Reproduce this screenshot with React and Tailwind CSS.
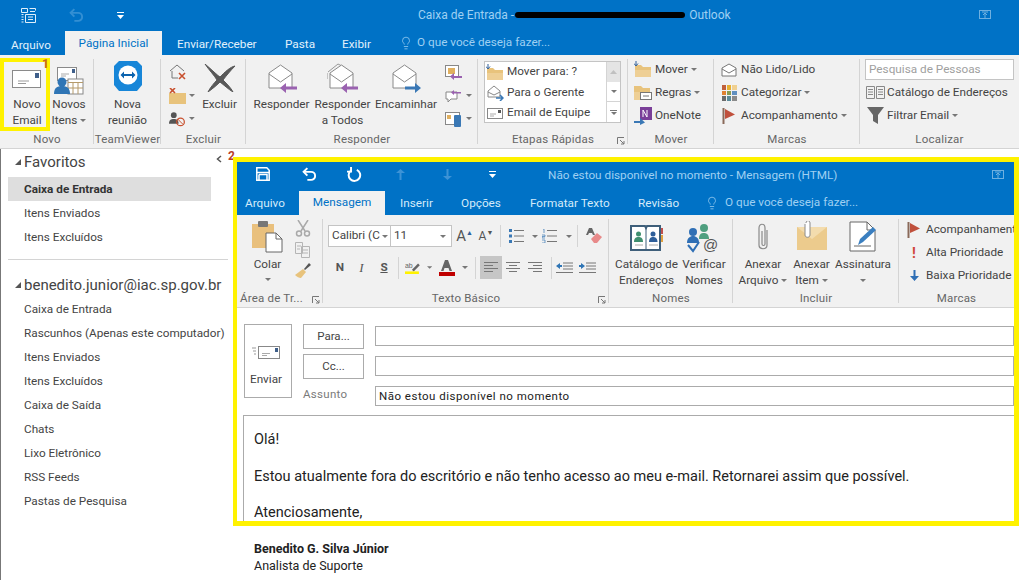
import React from 'react';
import { Lightbulb } from 'lucide-react';

const Caret = ({ className = 'ml-[3px]' }) => (
  <svg width="6" height="3" viewBox="0 0 6 3" className={`inline-block align-middle ${className}`}><path d="M0 0h6L3 3z" fill="#777" /></svg>
);

const Launcher = () => (
  <svg width="8" height="8" viewBox="0 0 8 8" className="absolute right-[3px] bottom-[3px]"><path d="M.5 7V.5H7M3 3l4 4M7 4v3H4" stroke="#777" fill="none" /></svg>
);

// ribbon pieces
const Group = ({ w, label, launcher, children, last }) => (
  <div className={`${w} shrink-0 h-full flex flex-col relative`}>
    <div className="flex-1 min-h-0 flex pt-[5px]">{children}</div>
    <div className="h-[16px] leading-[15px] text-center text-[11.5px] text-[#666] tracking-[0.2px] whitespace-nowrap">{label}</div>
    {launcher && <Launcher />}
    {!last && <div className="absolute right-0 top-[4px] bottom-[4px] w-px bg-[#d4d4d4]" />}
  </div>
);

const Large = ({ w, icon, lines, caret }) => (
  <div className={`${w} shrink-0 flex flex-col items-center text-[#444] whitespace-nowrap`}>
    <div className="h-[36px] flex items-end justify-center">{icon}</div>
    {lines.map((l, i) => (
      <div key={i} className="h-[16px] leading-[16px]">{l}{caret && i === lines.length - 1 && <Caret />}</div>
    ))}
  </div>
);

const Small = ({ icon, text, caret, h = 'h-[23px]' }) => (
  <div className={`${h} flex items-center text-[#444] whitespace-nowrap`}>
    <div className="w-[20px] mr-[2px] flex justify-center shrink-0">{icon}</div>
    {text}{caret && <Caret />}
  </div>
);

const Cell = ({ w, children, className = '' }) => (
  <div className={`${w} h-[22px] shrink-0 flex items-center justify-center ${className}`}>{children}</div>
);

const Sep = () => <div className="w-px h-[22px] bg-[#d4d4d4] shrink-0" />;

// drawings
const Envelope = () => (
  <svg width="30" height="20" viewBox="0 0 30 20"><rect x=".5" y=".5" width="28" height="17" fill="#fff" stroke="#8a8a8a" /><path d="M6 11h11M6 13.500h8" stroke="#9a9a9a" /><rect x="23" y="3" width="4" height="5" fill="#3f5f8a" /></svg>
);
const People = () => (
  <svg width="30" height="29" viewBox="0 0 30 29">
    <rect x="3.500" y=".5" width="19" height="13" fill="#fff" stroke="#8a8a8a" /><rect x="18" y="2" width="3" height="4" fill="#3f5f8a" /><path d="M7 7h8M7 9h5" stroke="#aaa" />
    <rect x="14" y="12" width="15" height="15" fill="#fff" stroke="#888" /><path d="M14 15.500h15M19 16v11M24 16v11M14 21h15" stroke="#b59a6a" />
    <circle cx="8" cy="15" r="4.500" fill="#2f75b5" /><path d="M0 27c0-6 3-8 8-8s8 2 8 8z" fill="#2f75b5" />
  </svg>
);
const TeamViewer = () => (
  <svg width="28" height="30" viewBox="0 0 28 30">
    <path d="M5 0h18l5 5v19l-5 6H5l-5-6V5z" fill="#1786d8" />
    <circle cx="14" cy="14" r="9.500" fill="#fff" /><path d="M6.500 14l3.500-3.500v2.500h8v-2.500l3.500 3.500-3.500 3.500V15h-8v2.500z" fill="#0a62ad" />
  </svg>
);
const BigX = () => (
  <svg width="32" height="28" viewBox="0 0 32 28"><path d="M1 0c7 6 12 11 15 13C21 8 26 3 31 2c-4 4-9 10-12 14 4 4 8 8 10 12-5-3-9-7-13-10-4 4-8 7-12 10 2-4 6-9 9-12C10 11 5 6 1 0z" fill="#585858" stroke="#585858" /></svg>
);
const OpenMail = ({ arrow, back, color = '#9a62b0' }) => (
  <svg width="32" height="30" viewBox="0 0 32 30">
    {back && <path d="M1 9L11 1l6 3M0 10v6" fill="none" stroke="#999" />}
    <path d="M3 10L14.500 2 26 10v15H3z" fill="#fff" stroke="#8a8a8a" /><path d="M3 11l11.500 8L26 11" fill="none" stroke="#8a8a8a" />
    {arrow === 'left'
      ? <path d="M31 23.500H20V20l-6 5 6 5v-3.500h11z" fill={color} />
      : <path d="M15 23.500h10V20l6 5-6 5v-3.500H15z" fill={color} />}
  </svg>
);
const Folder = ({ arrow }) => (
  <svg width="18" height="17" viewBox="0 0 18 17"><path d="M1 4h6l2 2h8v10H1z" fill="#e8c37c" /><path d="M1 9h16v7H1z" fill="#eecf95" />{arrow && <path d="M2 0v4M0 2.500L2 5l2-2.500" stroke="#2f5f9a" fill="none" />}</svg>
);
const Paper = () => (
  <svg width="33" height="34" viewBox="0 0 33 34">
    <path d="M1 5h22v24H1z" fill="#e9c07d" /><rect x="7" y="2" width="10" height="6" fill="#777" rx="1" />
    <path d="M15 14h10l6 6v13H15z" fill="#fff" stroke="#666" /><path d="M25 14v6h6" fill="none" stroke="#666" />
  </svg>
);
const Scissors = () => (
  <svg width="16" height="17" viewBox="0 0 16 17" fill="none" stroke="#a9a9a9" strokeWidth="1.500"><path d="M3 0l7 11M13 0L6 11" /><circle cx="4" cy="13.500" r="2.500" /><circle cx="12" cy="13.500" r="2.500" /></svg>
);
const Lines = ({ arrow }) => (
  <svg width="17" height="12" viewBox="0 0 17 12"><path d="M7 1h10M7 4h10M7 7h10M0 10.500h17" stroke="#777" />{arrow && <path d={arrow} fill="#2f75b5" />}</svg>
);
const Align = ({ d }) => <svg width="14" height="11" viewBox="0 0 14 11"><path d={d} stroke="#777" /></svg>;
const Book = () => (
  <svg width="33" height="28" viewBox="0 0 33 28">
    <path d="M1 2h14l1 2 1-2h13v24H1z" fill="#fff" stroke="#3f5f7a" strokeWidth="2" /><path d="M16 3v22" stroke="#3f5f7a" />
    <circle cx="8.500" cy="10" r="2.500" fill="#3f8f6f" /><path d="M4 18c0-4 2-5 4.500-5s4.500 1 4.500 5z" fill="#3f8f6f" />
    <circle cx="23" cy="10" r="2.500" fill="#2f5f9a" /><path d="M19 18c0-4 2-5 4-5s4.500 1 4.500 5z" fill="#2f5f9a" />
    <path d="M5 21h8M19 21h9" stroke="#aaa" /><path d="M31 4h2v6h-2z" fill="#c0504d" /><path d="M31 11h2v7h-2z" fill="#e0a040" />
  </svg>
);
const Verify = () => (
  <svg width="36" height="29" viewBox="0 0 36 29">
    <circle cx="18" cy="4" r="4" fill="#4f9f7f" /><path d="M13 15c0-5 2-6 5-6s5 2 5 6z" fill="#4f9f7f" />
    <circle cx="7" cy="8" r="4" fill="#2f6fb5" /><path d="M1 19c0-5 3-7 6-7s6 2 6 7z" fill="#2f6fb5" />
    <path d="M2 21l5 6 6-9" fill="none" stroke="#2f6fb5" strokeWidth="2" />
    <text x="17" y="26" fontSize="15" fill="#555" fontFamily="Liberation Sans">@</text>
  </svg>
);
const Clip = () => (
  <svg width="14" height="30" viewBox="0 0 14 30" fill="none" stroke="#8a8a8a" strokeWidth="1.200"><path d="M11 7v15c0 5-8 5-8 0V5c0-5 6-5 6 0v16c0 2-3 2-3 0V8" /></svg>
);
const ClipMail = () => (
  <svg width="30" height="29" viewBox="0 0 30 29"><path d="M0 6h30v23H0z" fill="#eccb8d" /><path d="M0 6l15 12L30 6" fill="#f3dcae" /><path d="M8 3v11c0 3 5 3 5 0V2c0-3-4-3-4 0" fill="#fff" stroke="#8a8a8a" /></svg>
);
const Signature = () => (
  <svg width="28" height="31" viewBox="0 0 28 31"><path d="M1 1h17l8 8v21H1z" fill="#fff" stroke="#666" /><path d="M18 1v8h8" fill="none" stroke="#666" /><path d="M5 25h17" stroke="#666" /><path d="M9 24l2-6 13-12 3 3-13 12z" fill="#3a7fc0" /></svg>
);
const Flag = () => <svg width="14" height="16" viewBox="0 0 14 16"><path d="M1.500 0v16" stroke="#8a6a5a" strokeWidth="2" /><path d="M3 1l10 5.500L3 11z" fill="#c0503c" /></svg>;
const Undo = ({ c = '#fff' }) => (
  <svg width="15" height="14" viewBox="0 0 14 13" fill="none" stroke={c} strokeWidth="1.800"><path d="M5 1L1.500 4.500 5 8" /><path d="M2 4.500h6.500a3.500 3.500 0 0 1 0 7.500H5" /></svg>
);
const Redo = () => (
  <svg width="15" height="15" viewBox="0 0 13 13" fill="none" stroke="#fff" strokeWidth="1.700"><path d="M8.500 2.500a5 5 0 1 1-5 .5" /><path d="M3.500 0v4h-3.500" /></svg>
);
const VArrow = ({ d }) => <svg width="9" height="11" viewBox="0 0 9 11"><path d={d} fill="#3d93d6" /></svg>;
const QatMenu = () => <svg width="7" height="7" viewBox="0 0 7 7"><path d="M0 .5h7" stroke="#fff" /><path d="M0 3h7L3.500 7z" fill="#fff" /></svg>;
const Restore = () => <svg width="12" height="9" viewBox="0 0 12 9" fill="none" stroke="#6fb0e0"><rect x=".5" y=".5" width="11" height="8" /><path d="M6 8V3M4 5l2-2 2 2M3 2h6" /></svg>;

const favorites = ['Itens Enviados', 'Itens Excluídos'];
const account = ['Caixa de Entrada', 'Rascunhos (Apenas este computador)', 'Itens Enviados', 'Itens Excluídos', 'Caixa de Saída', 'Chats', 'Lixo Eletrônico', 'RSS Feeds', 'Pastas de Pesquisa'];

function MainRibbon() {
  return (
    <div className="h-[93px] bg-[#f1f1f1] flex border-b border-[#d4d4d4] box-content">
      <Group w="w-[94px]" label="Novo">
        <div className="w-[51px] shrink-0 relative">
          <div className="absolute left-0 top-[-2px] w-[50px] h-[73px] border-[4px] border-[#fff200] bg-[#f3f3f3]" />
          <span className="absolute left-[42px] top-[-3px] text-[12px] leading-[14px] font-bold text-[#c8641e]">1</span>
          <div className="relative"><Large w="w-[54px]" icon={<div className="pb-[6px]"><Envelope /></div>} lines={['Novo', 'Email']} /></div>
        </div>
        <Large w="w-[36px]" icon={<People />} lines={['Novos', 'Itens']} caret />
      </Group>
      <Group w="w-[67px]" label="TeamViewer">
        <Large w="w-[67px]" icon={<div className="pb-[5px]"><TeamViewer /></div>} lines={['Nova', 'reunião']} />
      </Group>
      <Group w="w-[85px]" label="Excluir">
        <div className="w-[34px] pl-[8px] pt-[1px] shrink-0">
          <div className="h-[23px] flex items-center"><svg width="18" height="17" viewBox="0 0 18 17" fill="none"><path d="M1 7l7-6 7 6M3 7v7h6" stroke="#777" /><path d="M10 9l6 6M16 9l-6 6" stroke="#c8502e" strokeWidth="1.600" /></svg></div>
          <div className="h-[23px] flex items-center"><svg width="17" height="16" viewBox="0 0 17 16"><path d="M0 5h17v11H0z" fill="#e8c37c" /><path d="M1 0l5 5M6 0L1 5" stroke="#c8502e" strokeWidth="1.600" /></svg><Caret className="ml-[3px]" /></div>
          <div className="h-[23px] flex items-center"><svg width="18" height="16" viewBox="0 0 18 16" fill="none"><circle cx="5" cy="4" r="3" fill="#555" /><path d="M0 13c0-4 2-5 5-5s5 1 5 5z" fill="#555" /><circle cx="12" cy="11" r="4" stroke="#c8502e" strokeWidth="1.300" /><path d="M9 8l6 6" stroke="#c8502e" /></svg><Caret className="ml-[3px]" /></div>
        </div>
        <Large w="w-[49px]" icon={<div className="pb-[4px]"><BigX /></div>} lines={['Excluir']} />
      </Group>
      <Group w="w-[232px]" label="Responder">
        <div className="w-[5px] shrink-0" />
        <Large w="w-[61px]" icon={<div className="pb-[3px]"><OpenMail arrow="left" /></div>} lines={['Responder']} />
        <Large w="w-[61px]" icon={<div className="pb-[3px]"><OpenMail arrow="left" back /></div>} lines={['Responder', 'a Todos']} />
        <Large w="w-[66px]" icon={<div className="pb-[3px]"><OpenMail arrow="right" color="#3a78b5" /></div>} lines={['Encaminhar']} />
        <div className="pl-[6px] pt-[1px]">
          <div className="h-[23px] flex items-center"><svg width="17" height="15" viewBox="0 0 17 15"><rect x=".5" y=".5" width="13" height="11" fill="#fff" stroke="#888" /><path d="M3 3h7v6H3z" fill="#e0b060" /><path d="M17 11H9V8l-4 3.500L9 15v-2h8z" fill="#9a62b0" /></svg></div>
          <div className="h-[23px] flex items-center"><svg width="18" height="16" viewBox="0 0 18 16" fill="none"><path d="M1 4h11v7H6l-3 3v-3H1z" stroke="#888" fill="#fff" /><path d="M16 4H9V2L6 4.500 9 7V5.500h7z" fill="#9a62b0" /></svg><Caret className="ml-[3px]" /></div>
          <div className="h-[23px] flex items-center"><svg width="18" height="16" viewBox="0 0 18 16"><rect x=".5" y="1.500" width="14" height="12" fill="#fff" stroke="#888" /><path d="M2 4h4v4H2z" fill="#e0b060" /><rect x="9" y="4" width="7" height="12" rx="1" fill="#3a78b5" /></svg><Caret className="ml-[3px]" /></div>
        </div>
      </Group>
      <Group w="w-[150px]" label="Etapas Rápidas" launcher>
        <div className="ml-[6px] w-[137px] h-[62px] mt-[1px] bg-white border border-[#c4c4c4] flex">
          <div className="flex-1 text-[#444]">
            <Small h="h-[20px]" icon={<Folder arrow />} text="Mover para: ?" />
            <Small h="h-[21px]" icon={<svg width="17" height="16" viewBox="0 0 17 16" fill="none"><path d="M1 6l6-5 6 5v6H1z" stroke="#888" /><path d="M1 7l6 3 6-3" stroke="#888" /><path d="M9 13h7M13 10l3 3-3 3" stroke="#3a78b5" strokeWidth="1.500" /></svg>} text="Para o Gerente" />
            <Small h="h-[20px]" icon={<svg width="16" height="11" viewBox="0 0 16 11" fill="none"><rect x=".5" y=".5" width="15" height="10" stroke="#888" fill="#fff" /><path d="M3 6h6M3 8h4" stroke="#aaa" /><rect x="11" y="2" width="3" height="3" fill="#555" /></svg>} text="Email de Equipe" />
          </div>
          <div className="w-[14px] border-l border-[#d4d4d4] flex flex-col">
            <div className="h-[20px] bg-[#e4e4e4] flex items-center justify-center"><svg width="7" height="4" viewBox="0 0 7 4"><path d="M0 4h7L3.500 0z" fill="#c0c0c0" /></svg></div>
            <div className="h-[20px] border-b border-[#d4d4d4] flex items-center justify-center"><Caret className="" /></div>
            <div className="flex-1 flex flex-col items-center justify-center gap-[1px]"><div className="w-[7px] h-px bg-[#777]" /><Caret className="" /></div>
          </div>
        </div>
      </Group>
      <Group w="w-[86px]" label="Mover">
        <div className="pl-[5px] -mt-[2px]">
          <Small icon={<Folder arrow />} text="Mover" caret />
          <Small icon={<svg width="18" height="16" viewBox="0 0 18 16"><path d="M0 1h7l2 2h7v4H0z" fill="#e8c37c" /><path d="M0 7h10v8H0z" fill="#eecf95" /><rect x="6.500" y="7.500" width="11" height="7" fill="#fff" stroke="#777" /><path d="M9 11h6" stroke="#777" /></svg>} text="Regras" caret />
          <Small icon={<svg width="18" height="18" viewBox="0 0 18 18"><rect x="6" y="0" width="12" height="13" fill="#7a3f98" /><path d="M9 10V3l4 7V3" stroke="#fff" fill="none" /><path d="M0 14h6v-3l5 4.500L6 18v-2H0z" fill="#3a78b5" /></svg>} text="OneNote" />
        </div>
      </Group>
      <Group w="w-[146px]" label="Marcas">
        <div className="pl-[5px] -mt-[2px]">
          <Small icon={<svg width="16" height="14" viewBox="0 0 16 14" fill="none"><path d="M1 5l7-4 7 4v8H1z" stroke="#777" fill="#fff" /><path d="M1 6l7 4 7-4" stroke="#777" /></svg>} text="Não Lido/Lido" />
          <Small icon={<svg width="15" height="16" viewBox="0 0 15 16"><path d="M0 0h4v5H0z" fill="#c0603c" /><path d="M5 0h4v5H5z" fill="#e8b030" /><path d="M10 0h5v5h-5z" fill="#f0d090" /><path d="M0 6h4v4H0z" fill="#e08030" /><path d="M5 6h4v4H5z" fill="#8a9a50" /><path d="M10 6h5v4h-5z" fill="#5f8fc0" /><path d="M0 11h4v5H0z" fill="#6a6a6a" /><path d="M5 11h4v5H5z" fill="#5a8a9a" /><path d="M10 11h5v5h-5z" fill="#8a8a8a" /></svg>} text="Categorizar" caret />
          <Small icon={<Flag />} text="Acompanhamento" caret />
        </div>
      </Group>
      <Group w="w-[159px]" label="Localizar" last>
        <div className="pl-[5px] -mt-[1px]">
          <div className="w-[149px] h-[21px] bg-white border border-[#c4c4c4] leading-[19px] pl-[3px] text-[#a0a0a0] mb-[1px]">Pesquisa de Pessoas</div>
          <Small icon={<svg width="19" height="13" viewBox="0 0 19 13" fill="none" stroke="#888"><path d="M.5.500h8v12h-8zM10.500.500h8v12h-8zM2 3.500h5M2 6h5M2 8.500h5M12 3.500h5M12 6h5M12 8.500h5" /></svg>} text="Catálogo de Endereços" />
          <Small icon={<svg width="17" height="17" viewBox="0 0 17 17"><path d="M0 0h17l-6 8v9l-5-3V8z" fill="#666" /></svg>} text="Filtrar Email" caret />
        </div>
      </Group>
    </div>
  );
}

function MessageRibbon() {
  return (
    <div className="h-[93px] bg-[#f1f1f1] flex border-b border-[#d4d4d4]">
      <Group w="w-[86px]" label={<div className="text-left pl-[3px]">Área de Tr...</div>} launcher>
        <div className="w-[57px] shrink-0 flex flex-col items-center pl-[4px]">
          <div className="h-[33px] flex items-end"><Paper /></div>
          <div className="h-[18px] leading-[18px] text-[#444] mt-[2px]">Colar</div>
          <Caret className="mt-[5px]" />
        </div>
        <div className="flex flex-col items-center gap-[5px]">
          <Scissors />
          <svg width="15" height="16" viewBox="0 0 15 16" fill="none" stroke="#b5b5b5"><path d="M.5.500h7v11h-7zM6.500 4.500h8v11h-8zM2 4h4M2 7h3M8 8h5M8 11h5" /></svg>
          <svg width="17" height="15" viewBox="0 0 17 15"><path d="M10 6l5-6 2 2-6 5z" fill="#555" /><path d="M1 12l8-6 3 3-5 6c-2 0-4-1-6-3z" fill="#e8c37c" /></svg>
        </div>
      </Group>
      <Group w="w-[286px]" label="Texto Básico" launcher>
        <div className="pl-[5px] pt-[5px] flex flex-col gap-[9px]">
          <div className="flex items-center">
            <div className="w-[63px] h-[22px] bg-white border border-[#c4c4c4] flex items-center pl-[3px] text-[#444] whitespace-nowrap overflow-hidden">Calibri (C<Caret className="ml-[2px]" /></div>
            <div className="w-[61px] h-[22px] bg-white border border-l-0 border-[#c4c4c4] flex items-center justify-between pl-[3px] pr-[5px] text-[#444]">11<Caret className="" /></div>
            <Cell w="w-[23px]" className="ml-[1px] text-[15px] text-[#555]">A<sup className="text-[7px] text-[#2f5f9a]">▲</sup></Cell>
            <Cell w="w-[20px]" className="text-[12px] text-[#555]">A<sup className="text-[7px] text-[#555]">▼</sup></Cell>
            <div className="w-[4px]" /><Sep />
            <Cell w="w-[41px]" className="justify-start pl-[8px]"><svg width="15" height="14" viewBox="0 0 15 14"><path d="M5 1.500h10M5 7h10M5 12.500h10" stroke="#777" /><path d="M0 0h3v3H0zM0 5.500h3v3H0zM0 11h3v3H0z" fill="#3a78b5" /></svg><Caret className="ml-[8px]" /></Cell>
            <Cell w="w-[35px]" className="justify-start"><svg width="15" height="14" viewBox="0 0 15 14"><path d="M5 1.500h10M5 7h10M5 12.500h10" stroke="#777" /><path d="M1 0h1v4M0 6h3v1.500H0V9h3M0 11h3v3H0" stroke="#3a78b5" fill="none" strokeWidth=".7" /></svg><Caret className="ml-[9px]" /></Cell>
            <Sep />
            <Cell w="w-[31px]"><svg width="16" height="16" viewBox="0 0 16 16"><path d="M3 0h3l3 7H7L6 5H3L2 7H0z" fill="#666" /><path d="M5 11l6-6 5 4-5 6H8z" fill="#e88a8a" /></svg></Cell>
          </div>
          <div className="flex items-center">
            <Cell w="w-[22px]" className="font-bold text-[#555] ml-[1px]">N</Cell>
            <Cell w="w-[21px]" className="italic text-[#555] font-['Liberation_Serif'] text-[13px]">I</Cell>
            <Cell w="w-[24px]" className="font-bold underline text-[#555]">S</Cell>
            <div className="w-[2px]" /><Sep />
            <Cell w="w-[33px]" className="pl-[6px]"><svg width="17" height="15" viewBox="0 0 17 15"><text x="0" y="8" fontSize="8" fill="#666" fontFamily="Liberation Sans">ab</text><path d="M8 10l7-7 2 2-7 7z" fill="#666" /><path d="M0 12h16v3H0z" fill="#fff200" /></svg><Caret className="ml-[7px]" /></Cell>
            <Cell w="w-[37px]" className="pl-[5px]"><svg width="16" height="16" viewBox="0 0 16 16"><path d="M6 0h3l4 11h-2.500L9.500 8h-4L4.500 11H2z" fill="#666" /><path d="M0 12h16v4H0z" fill="#c00000" /></svg><Caret className="ml-[7px]" /></Cell>
            <div className="w-[6px]" /><Sep />
            <Cell w="w-[4px]" />
            <div className="w-[22px] h-[23px] bg-[#c6c6c6] flex items-center justify-center"><Align d="M0 .5h14M0 3.500h9M0 6.500h14M0 9.500h9" /></div>
            <Cell w="w-[22px]"><Align d="M0 .5h14M3 3.500h8M0 6.500h14M3 9.500h8" /></Cell>
            <Cell w="w-[22px]"><Align d="M0 .5h14M5 3.500h9M0 6.500h14M5 9.500h9" /></Cell>
            <div className="w-[5px]" /><Sep />
            <Cell w="w-[24px]"><Lines arrow="M0 4l4-3v2h2v2H4v2z" /></Cell>
            <Cell w="w-[22px]"><Lines arrow="M6 4L2 1v2H0v2h2v2z" /></Cell>
          </div>
        </div>
      </Group>
      <Group w="w-[124px]" label="Nomes">
        <div className="w-[3px] shrink-0" />
        <Large w="w-[69px]" icon={<div className="pb-[4px]"><Book /></div>} lines={['Catálogo de', 'Endereços']} />
        <Large w="w-[46px]" icon={<div className="pb-[3px]"><Verify /></div>} lines={['Verificar', 'Nomes']} />
      </Group>
      <Group w="w-[166px]" label="Incluir">
        <div className="w-[2px] shrink-0" />
        <Large w="w-[56px]" icon={<div className="pb-[3px]"><Clip /></div>} lines={['Anexar', 'Arquivo']} caret />
        <Large w="w-[41px]" icon={<div className="pb-[6px]"><ClipMail /></div>} lines={['Anexar', 'Item']} caret />
        <div className="w-[62px] shrink-0 flex flex-col items-center text-[#444] whitespace-nowrap">
          <div className="h-[36px] flex items-end"><div className="pb-[4px]"><Signature /></div></div>
          <div className="h-[16px] leading-[16px]">Assinatura</div>
          <div className="h-[16px] flex items-center"><Caret className="" /></div>
        </div>
      </Group>
      <Group w="w-[115px]" label="Marcas" last>
        <div className="pl-[5px] -mt-[2px] overflow-hidden w-full">
          <Small icon={<Flag />} text="Acompanhamento" />
          <Small icon={<span className="text-[#d0453a] font-bold text-[14px] leading-[14px]">!</span>} text="Alta Prioridade" />
          <Small icon={<svg width="9" height="11" viewBox="0 0 9 11"><path d="M3.500 0h2v6H9l-4.500 5L0 6h3.500z" fill="#2f6fb5" /></svg>} text="Baixa Prioridade" />
        </div>
      </Group>
    </div>
  );
}

function MessageWindow() {
  return (
    <div className="relative h-[369px] border-y-[5px] border-l-[4px] border-r-[5px] border-[#fff200] flex flex-col overflow-hidden">
      <div className="h-[24px] bg-[#0072c6] flex items-center relative shrink-0">
        <div className="w-[52px] shrink-0 pl-[19px]"><svg width="14" height="14" viewBox="0 0 14 14" fill="none" stroke="#fff" strokeWidth="1.500"><path d="M.8.8h10l2.400 2.400v10H.8z" /><path d="M3 7.500h8v5.500M3 7.500V13" /><path d="M.8 5.500h12.400" /></svg></div>
        <div className="w-[46px] flex justify-center shrink-0 -ml-[3px]"><Undo /></div>
        <div className="w-[45px] flex justify-center shrink-0"><Redo /></div>
        <div className="w-[47px] flex justify-center shrink-0"><VArrow d="M3.500 11V4H0l4.500-4L9 4H5.500v7z" /></div>
        <div className="w-[46px] flex justify-center shrink-0"><VArrow d="M3.500 0v7H0l4.500 4L9 7H5.500V0z" /></div>
        <div className="w-[45px] flex justify-center shrink-0"><QatMenu /></div>
        <div className="ml-[33px] text-[#9fd0f2] whitespace-nowrap pt-[3px]">Não estou disponível no momento - Mensagem (HTML)</div>
        <div className="absolute right-[10px] top-[8px]"><Restore /></div>
      </div>
      <div className="h-[29px] pt-[5px] bg-[#0072c6] flex items-end text-[#d5ebfa] shrink-0 whitespace-nowrap">
        <div className="w-[7px]" />
        <div className="w-[42px] h-[24px] leading-[24px] text-center">Arquivo</div>
        <div className="w-[13px]" />
        <div className="w-[86px] h-[24px] leading-[23px] text-center bg-[#f1f1f1] text-[#0072c6]">Mensagem</div>
        <div className="w-[15px]" />
        <div className="w-[33px] h-[24px] leading-[24px] text-center">Inserir</div>
        <div className="w-[28px]" />
        <div className="w-[40px] h-[24px] leading-[24px] text-center">Opções</div>
        <div className="w-[29px]" />
        <div className="w-[79px] h-[24px] leading-[24px] text-center">Formatar Texto</div>
        <div className="w-[29px]" />
        <div className="w-[40px] h-[24px] leading-[24px] text-center">Revisão</div>
        <div className="w-[27px]" />
        <div className="h-[24px] flex items-center gap-[6px] text-[#9fd0f2]"><Lightbulb size={14} strokeWidth={1.3} />O que você deseja fazer...</div>
      </div>
      <MessageRibbon />
      <div className="h-[107px] bg-white flex shrink-0 pl-[7px] pt-[15px] text-[#444]">
        <div className="w-[48px] pr-[4px] h-[74px] border border-[#ababab] flex flex-col items-center shrink-0 mt-[1px]">
          <svg width="28" height="14" viewBox="0 0 28 14" className="mt-[21px]"><path d="M0 2h4M1 5h3M2 8h2" stroke="#999" /><rect x="6.500" y=".5" width="21" height="12" fill="#fff" stroke="#888" /><path d="M10 7.500h8M10 9.500h5" stroke="#aaa" /><rect x="23" y="2" width="3" height="4" fill="#3f5f8a" /></svg>
          <div className="mt-[12px] leading-[14px]">Enviar</div>
        </div>
        <div className="w-[61px] ml-[11px] shrink-0 mt-[1px]">
          <div className="h-[25px] border border-[#ababab] text-center leading-[23px] text-[11.5px]">Para...</div>
          <div className="h-[25px] mt-[5px] border border-[#ababab] text-center leading-[23px] text-[11.5px]">Cc...</div>
          <div className="mt-[8px] text-[#7a7a7a] text-[11.5px] tracking-[0.3px] leading-[14px]">Assunto</div>
        </div>
        <div className="flex-1 ml-[11px] pt-[3px]">
          <div className="h-[20px] border border-[#ababab]" />
          <div className="h-[20px] border border-[#ababab] mt-[10px]" />
          <div className="h-[20px] border border-[#ababab] mt-[10px] leading-[18px] pl-[3px] text-[#222] text-[11.5px] tracking-[0.5px]">Não estou disponível no momento</div>
        </div>
      </div>
      <div className="flex-1 min-h-0 bg-white pl-[6px]">
        <div className="h-full border-l border-t border-[#ababab] pl-[10px] pt-[15px] text-[14.5px] text-[#222] leading-[18px]">
          <p>Olá!</p>
          <p className="mt-[19px] whitespace-nowrap">Estou atualmente fora do escritório e não tenho acesso ao meu e-mail. Retornarei assim que possível.</p>
          <p className="mt-[18px]">Atenciosamente,</p>
        </div>
      </div>
    </div>
  );
}

export default function App() {
  return (
    <div className="w-[1019px] h-[580px] overflow-hidden bg-white flex flex-col font-['Roboto','Liberation_Sans',sans-serif] text-[11.75px]">
      <div className="h-[30px] bg-[#0072c6] flex items-center relative shrink-0">
        <div className="w-[55px] pl-[20px] shrink-0"><svg width="17" height="17" viewBox="0 0 17 17" fill="none" stroke="#dfeffa"><path d="M1.500 1.500h6v4h-6zM9.500 1.500h6v2M1.500 7.500h2M1.500 10h2M1.500 12.500h2M1.500 15h2M5.500 7.500h10v8h-10zM8 10h5M8 12.500h5M10 4.500h5" /></svg></div>
        <div className="w-[42px] flex justify-center shrink-0 opacity-40"><Undo c="#7fbce8" /></div>
        <div className="w-[27px] flex justify-end shrink-0"><QatMenu /></div>
        <div className="ml-[294px] text-[#9fd0f2] whitespace-nowrap flex items-center text-[12px]">
          Caixa de Entrada - <span className="ml-[1px] w-[170px] h-[6px] rounded-full bg-black inline-block mr-[4px]" /> Outlook
        </div>
        <div className="absolute left-[979px] top-[10px]"><Restore /></div>
      </div>
      <div className="h-[25px] bg-[#0072c6] flex items-end text-[#e2f1fb] shrink-0 whitespace-nowrap">
        <div className="w-[10px]" />
        <div className="w-[42px] h-[24px] leading-[28px] text-center">Arquivo</div>
        <div className="w-[13px]" />
        <div className="w-[97px] h-[24px] leading-[24px] text-center bg-[#f1f1f1] text-[#0072c6]">Página Inicial</div>
        <div className="w-[15px]" />
        <div className="w-[79px] h-[24px] leading-[26px] text-center">Enviar/Receber</div>
        <div className="w-[29px]" />
        <div className="w-[28px] h-[24px] leading-[26px] text-center">Pasta</div>
        <div className="w-[29px]" />
        <div className="w-[29px] h-[24px] leading-[26px] text-center">Exibir</div>
        <div className="w-[28px]" />
        <div className="h-[24px] flex items-center gap-[4px] text-[#9fd0f2]"><Lightbulb size={14} strokeWidth={1.3} />O que você deseja fazer...</div>
      </div>
      <MainRibbon />
      <div className="flex-1 min-h-0 flex">
        <div className="w-[233px] shrink-0 relative border-l border-[#777] text-[#444] pt-[3px]">
          <div className="h-[20px] pl-[14px] flex items-center text-[15px] whitespace-nowrap gap-[3px]"><svg width="6" height="6" viewBox="0 0 6 6"><path d="M6 0v6H0z" fill="#555" /></svg>Favoritos</div>
          <div className="mt-[5px] ml-[7px] w-[203px] h-[24px] bg-[#dedede] pl-[16px] leading-[24px] font-bold text-[#333]">Caixa de Entrada</div>
          {favorites.map(f => <div key={f} className="h-[24px] leading-[24px] pl-[23px]">{f}</div>)}
          <div className="ml-[7px] w-[220px] h-px bg-[#d4d4d4] mt-[10px]" />
          <div className="mt-[15px] h-[20px] pl-[14px] flex items-center text-[15px] whitespace-nowrap gap-[3px]"><svg width="6" height="6" viewBox="0 0 6 6"><path d="M6 0v6H0z" fill="#555" /></svg>benedito.junior@iac.sp.gov.br</div>
          <div className="mt-[2px]">{account.map(f => <div key={f} className="h-[24px] leading-[24px] pl-[23px] whitespace-nowrap">{f}</div>)}</div>
          <svg width="6" height="8" viewBox="0 0 6 8" className="absolute left-[215px] top-[6px]"><path d="M5 1L1.500 4 5 7" stroke="#555" strokeWidth="1.500" fill="none" /></svg>
          <span className="absolute left-[227px] top-[0px] text-[12px] leading-[14px] font-bold text-[#b8402a]">2</span>
        </div>
        <div className="flex-1 min-w-0 pt-[8px]">
          <MessageWindow />
          <div className="pl-[21px] pt-[14px] text-[#222] text-[12.5px] leading-[17px]">
            <div className="font-bold">Benedito G. Silva Júnior</div>
            <div>Analista de Suporte</div>
          </div>
        </div>
      </div>
    </div>
  );
}
